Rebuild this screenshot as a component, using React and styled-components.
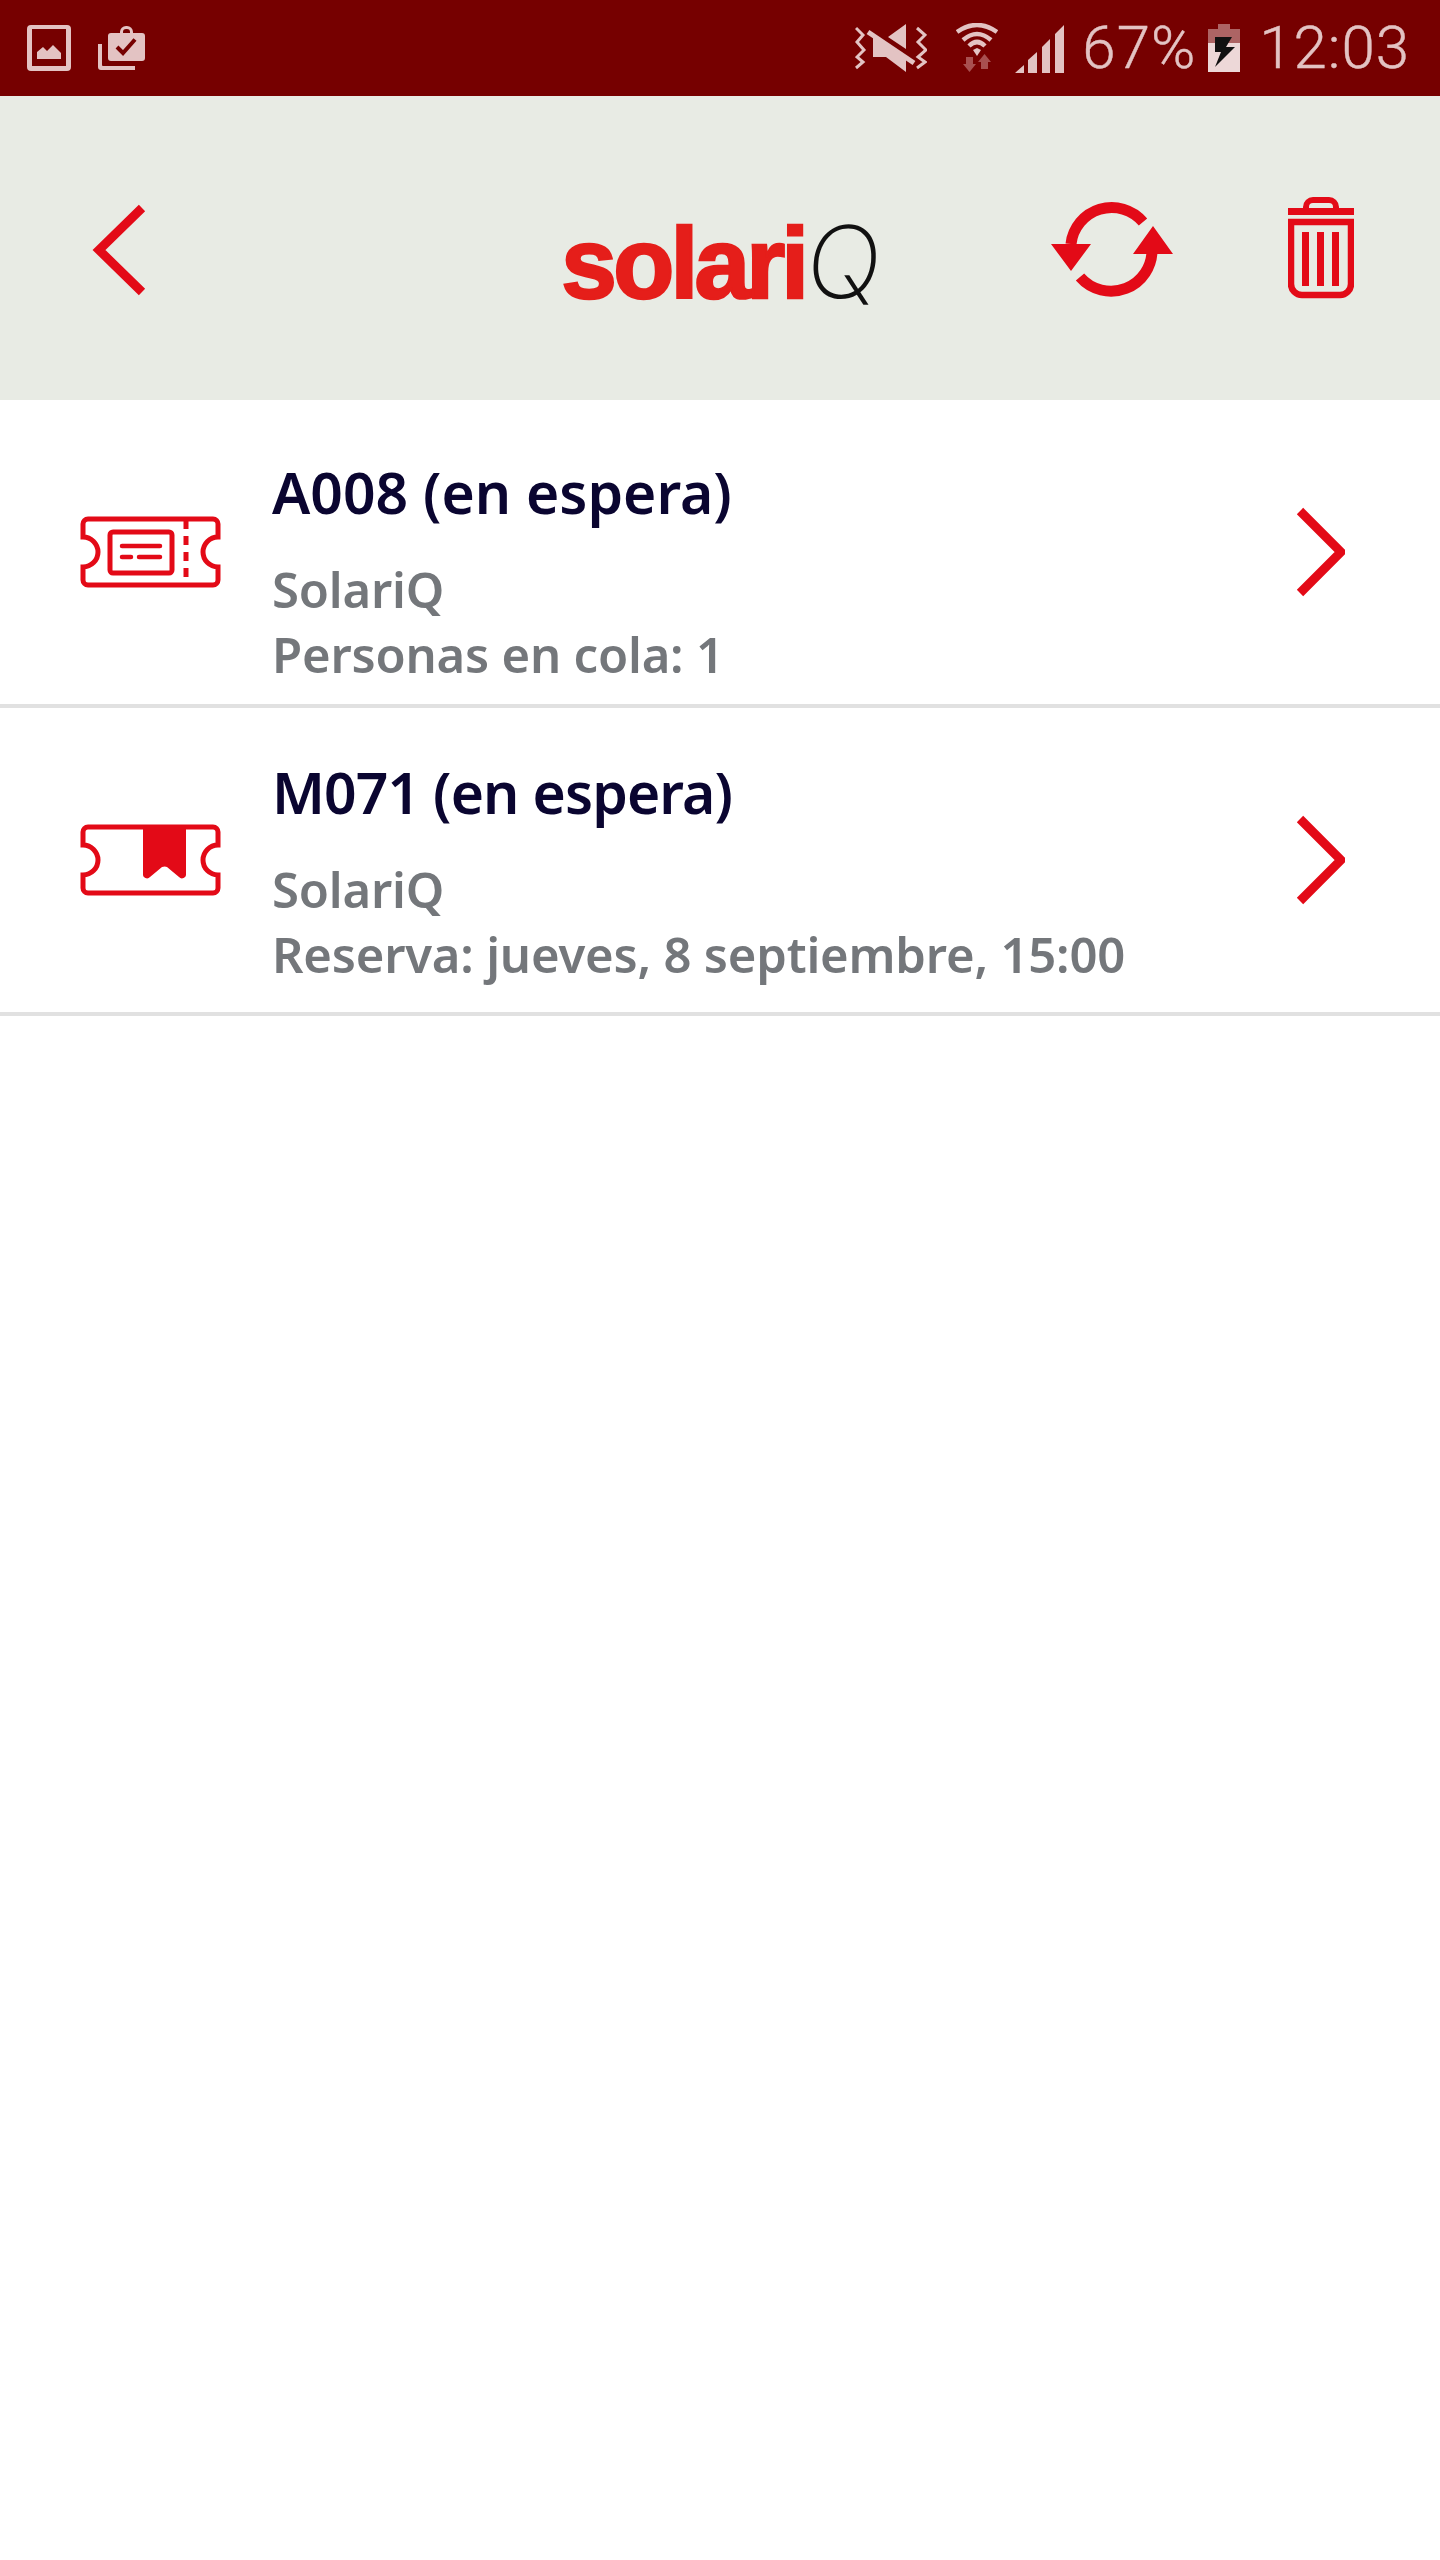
import React from "react";
import styled, { createGlobalStyle } from "styled-components";

const RED = "#e30a17";
const ICON = "#e3c3c3";

const Global = createGlobalStyle`
  html, body { margin: 0; padding: 0; background: #fff; }
  body { font-family: "Noto Sans", sans-serif; }
`;

const Screen = styled.div`
  width: 1440px;
  height: 2560px;
  background: #fff;
  overflow: hidden;
`;

const StatusBar = styled.div`
  height: 96px;
  background: #760000;
  display: flex;
  align-items: center;
  justify-content: space-between;
  padding: 0 30px 0 27px;
  box-sizing: border-box;
`;

const StatusGroup = styled.div`
  display: flex;
  align-items: center;
`;

const StatusIconSlot = styled.div`
  display: flex;
  margin-left: ${(p) => p.$left || 0}px;
`;

const StatusText = styled.span`
  font-family: Roboto, sans-serif;
  font-weight: 300;
  font-size: 60px;
  letter-spacing: 1px;
  color: ${ICON};
  line-height: 96px;
  margin-left: ${(p) => p.$left || 0}px;
  -webkit-text-stroke: 0.4px ${ICON};
`;

const Header = styled.header`
  height: 304px;
  background: #e8ebe4;
  display: grid;
  grid-template-columns: 1fr auto 1fr;
  align-items: center;
  padding: 0 86px 0 90px;
`;

const HeaderSide = styled.div`
  display: flex;
  align-items: center;
  justify-content: ${(p) => (p.$end ? "flex-end" : "flex-start")};
  gap: ${(p) => p.$gap || 0}px;
`;

const Logo = styled.div`
  display: flex;
  align-items: baseline;
  line-height: 1;
  margin-top: 28px;
`;

const LogoWord = styled.span`
  font-family: "Liberation Sans", sans-serif;
  font-weight: 700;
  font-size: 100px;
  letter-spacing: -3.8px;
  color: #e51e1a;
  -webkit-text-stroke: 2.5px #e51e1a;
`;

const LogoQ = styled.span`
  font-family: Inter, sans-serif;
  font-weight: 200;
  font-size: 100px;
  color: #111;
  margin-left: 2px;
  transform: skewX(-6deg);
`;

const Row = styled.div`
  height: 304px;
  border-bottom: 4px solid #e1e1e1;
  display: flex;
  align-items: center;
  padding: 0 95px 0 80px;
`;

const TicketSlot = styled.div`
  width: 192px;
  flex: none;
  display: flex;
`;

const RowBody = styled.div`
  flex: 1;
  min-width: 0;
  margin-top: ${(p) => p.$top}px;
`;

const Title = styled.div`
  font-size: 57px;
  line-height: 76px;
  font-weight: 600;
  color: #0a0530;
  letter-spacing: ${(p) => p.$track}px;
  margin-bottom: 27px;
`;

const Detail = styled.div`
  font-size: 49px;
  line-height: 65px;
  font-weight: 600;
  color: #74777b;
  letter-spacing: -0.2px;
`;

const BackIcon = () => (
  <svg width="60" height="96" viewBox="0 0 60 96">
    <path d="M52 8 L9 50 L52 92" fill="none" stroke={RED} strokeWidth="9" />
  </svg>
);

const RefreshIcon = () => (
  <svg width="124" height="98" viewBox="0 0 124 98">
    <path d="M21 45 A41 41 0 0 1 93 23" fill="none" stroke={RED} strokeWidth="11" />
    <path d="M102 50 A41 41 0 0 1 30 78" fill="none" stroke={RED} strokeWidth="11" />
    <path d="M1 45 H41 L21 72 Z M103 27 L83 55 H123 Z" fill={RED} />
  </svg>
);

const TrashIcon = () => (
  <svg width="66" height="102" viewBox="0 0 66 102">
    <path d="M0 11 H66 V18 H0 Z" fill={RED} />
    <path d="M18 11 V10 A7 7 0 0 1 25 3 H41 A7 7 0 0 1 48 10 V11" fill="none" stroke={RED} strokeWidth="6" />
    <path d="M3 25 H63 V87 A11 11 0 0 1 52 98 H14 A11 11 0 0 1 3 87 Z" fill="none" stroke={RED} strokeWidth="6.5" />
    <path d="M14 35 H21 V89 H14 Z M29 35 H36 V89 H29 Z M44 35 H51 V89 H44 Z" fill={RED} />
  </svg>
);

const ticketOutline =
  "M8 3 H133 A5 5 0 0 1 138 8 V21 A15 15 0 0 0 138 51 V64 A5 5 0 0 1 133 69 H8 A5 5 0 0 1 3 64 V51 A15 15 0 0 0 3 21 V8 A5 5 0 0 1 8 3 Z";

const TicketOpen = () => (
  <svg width="141" height="72" viewBox="0 0 141 72">
    <path d={ticketOutline} fill="none" stroke={RED} strokeWidth="5" />
    <rect x="30" y="16" width="62" height="41" rx="3" fill="none" stroke={RED} strokeWidth="5" />
    <path d="M42 30 H80 M42 41 H51 M59 41 H80" stroke={RED} strokeWidth="4.5" strokeLinecap="round" />
    <path d="M106 4 V69" stroke={RED} strokeWidth="5" strokeDasharray="9 7" />
  </svg>
);

const TicketReserved = () => (
  <svg width="141" height="72" viewBox="0 0 141 72">
    <path d={ticketOutline} fill="none" stroke={RED} strokeWidth="5" />
    <path d="M63 3 H106 V50 A4 4 0 0 1 99 53 L87 43 Q85 42 82 43 L70 53 A4 4 0 0 1 63 50 Z" fill={RED} />
  </svg>
);

const ChevronIcon = () => (
  <svg width="50" height="90" viewBox="0 0 50 90">
    <path d="M5 4 L46 45 L5 86" fill="none" stroke={RED} strokeWidth="9" />
  </svg>
);

const tickets = [
  { id: "A008", detail: "Personas en cola: 1", icon: <TicketOpen />, top: 36, track: 0 },
  { id: "M071", detail: "Reserva: jueves, 8 septiembre, 15:00", icon: <TicketReserved />, top: 20, track: -0.9 },
];

const PictureIcon = () => (
  <svg width="44" height="46" viewBox="0 0 44 46">
    <path fillRule="evenodd" d="M4 0 H40 A4 4 0 0 1 44 4 V42 A4 4 0 0 1 40 46 H4 A4 4 0 0 1 0 42 V4 A4 4 0 0 1 4 0 Z M5 4 V41 H39 V4 Z" fill={ICON} />
    <path d="M10 34 V27 L16 22 L20 26 L26 20 L34 28 V34 Z" fill={ICON} />
  </svg>
);

const WorkIcon = () => (
  <svg width="47" height="44" viewBox="0 0 47 44">
    <path d="M0 18 H4 V39 A1 1 0 0 0 5 40 H37 V44 H3 A3 3 0 0 1 0 41 Z" fill={ICON} />
    <path fillRule="evenodd" d="M13 7 H22 V6 A6 6 0 0 1 28 0 H29 A6 6 0 0 1 35 6 V7 H44 A3 3 0 0 1 47 10 V32 A3 3 0 0 1 44 35 H13 A3 3 0 0 1 10 32 V10 A3 3 0 0 1 13 7 Z M25 7 H32 V6 A3 3 0 0 0 29 3 H28 A3 3 0 0 0 25 6 Z" fill={ICON} />
    <path d="M19 21 L25 27 L37 13.5" fill="none" stroke="#760000" strokeWidth="4" />
  </svg>
);

const MuteIcon = () => (
  <svg width="72" height="48" viewBox="0 0 72 48">
    <path d="M1 4 L8 11 L2 18 L9 26 L2 33 L8 38 L1 44 M62 4 L70 11 L63 18 L71 26 L63 33 L70 38 L62 44" fill="none" stroke={ICON} strokeWidth="3" />
    <path d="M51 0 V25 L33 13 Z M18 12 L51 34 V48 L31 33 H18 Z" fill={ICON} />
    <path d="M13 8 L59 39" stroke={ICON} strokeWidth="5" />
  </svg>
);

const WifiIcon = () => (
  <svg width="42" height="50" viewBox="0 0 42 50">
    <path d="M1 9 Q21 -5 41 9 M7 17 Q21 5 35 17 M13 23 Q21 15 29 23" fill="none" stroke={ICON} strokeWidth="4.5" />
    <path d="M17 27 L21 25 L25 27 L21 33 Z" fill={ICON} />
    <path d="M10 34 H17 V41 H20 L13.500 49 L7 41 H10 Z M25 46 V39 H22 L28.500 31 L35 39 H32 V46 Z" fill="#a85050" />
  </svg>
);

const SignalIcon = () => (
  <svg width="49" height="49" viewBox="0 0 49 49">
    <path d="M0 49 L9 41 V49 Z M13 49 V36 L22 28 V49 Z M27 49 V23 L35 15 V49 Z M40 49 V10 L49 1 V49 Z" fill={ICON} />
  </svg>
);

const BatteryIcon = () => (
  <svg width="32" height="48" viewBox="0 0 32 48">
    <path d="M10 0 H22 V5 H32 V19 H0 V5 H10 Z" fill="#ad6464" />
    <path d="M0 19 H32 V48 H0 Z" fill="#edd8d8" />
    <path d="M7 13 H24 L18 23 H27 L7 43 L13 28 H7 Z" fill="#111" />
  </svg>
);

export default function App() {
  return (
    <Screen>
      <Global />
      <StatusBar>
        <StatusGroup>
          <PictureIcon />
          <StatusIconSlot $left={27}>
            <WorkIcon />
          </StatusIconSlot>
        </StatusGroup>
        <StatusGroup>
          <MuteIcon />
          <StatusIconSlot $left={29}>
            <WifiIcon />
          </StatusIconSlot>
          <StatusIconSlot $left={17}>
            <SignalIcon />
          </StatusIconSlot>
          <StatusText $left={18}>67%</StatusText>
          <StatusIconSlot $left={12}>
            <BatteryIcon />
          </StatusIconSlot>
          <StatusText $left={19}>12:03</StatusText>
        </StatusGroup>
      </StatusBar>
      <Header>
        <HeaderSide>
          <BackIcon />
        </HeaderSide>
        <Logo>
          <LogoWord>solari</LogoWord>
          <LogoQ>Q</LogoQ>
        </Logo>
        <HeaderSide $end $gap={114}>
          <RefreshIcon />
          <TrashIcon />
        </HeaderSide>
      </Header>
      {tickets.map((t) => (
        <Row key={t.id}>
          <TicketSlot>{t.icon}</TicketSlot>
          <RowBody $top={t.top}>
            <Title $track={t.track}>{t.id} (en espera)</Title>
            <Detail>SolariQ</Detail>
            <Detail>{t.detail}</Detail>
          </RowBody>
          <ChevronIcon />
        </Row>
      ))}
    </Screen>
  );
}
